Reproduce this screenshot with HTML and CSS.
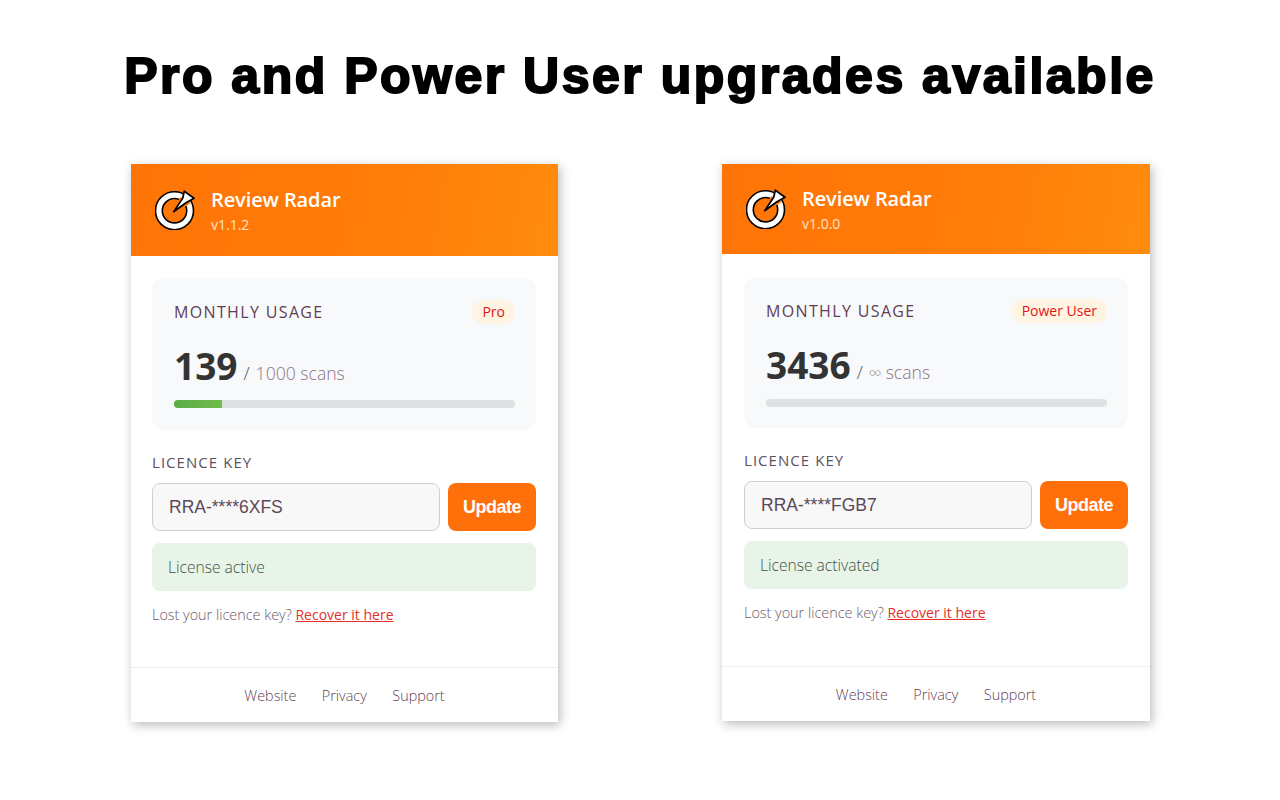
FILE: index.html
```html
<!DOCTYPE html>
<html lang="en">
<head>
<meta charset="utf-8">
<title>Review Radar</title>
<link rel="stylesheet" href="styles.css">
</head>
<body>
<svg class="defs" width="0" height="0" aria-hidden="true">
  <symbol id="radar" viewBox="0 0 40 40">
    <circle cx="19.5" cy="20.7" r="15.6" fill="none" stroke="#000" stroke-width="8.4"/>
    <circle cx="19.5" cy="20.7" r="15.6" fill="none" stroke="#fff" stroke-width="5.2"/>
    <path d="M18.7 21.7 L26 9 L33 13 Z" fill="#ff7a0a" stroke="#ff7a0a" stroke-width="3"/>
    <path d="M18.7 21.7 L27.7 8.3 L29.3 1.2 L39 8.3 L31 12.7 Z" fill="#fff" stroke="#000" stroke-width="1.7" stroke-linejoin="round"/>
  </symbol>
</svg>
<h1 class="title">Pro and Power User upgrades available</h1>
<main class="cards">
  <section class="card card-a">
    <header class="head head-tall">
      <svg class="logo"><use href="#radar"/></svg>
      <div class="brand"><div class="name">Review Radar</div><div class="ver">v1.1.2</div></div>
    </header>
    <div class="body">
      <div class="usage">
        <div class="usage-top"><span class="usage-label">MONTHLY USAGE</span><span class="badge">Pro</span></div>
        <div class="count"><b>139</b><span class="slash">/</span><span class="of">1000 scans</span></div>
        <div class="track"><div class="fill" style="width:14%"></div></div>
      </div>
      <div class="key-label">LICENCE KEY</div>
      <div class="key-row"><div class="input">RRA-****6XFS</div><div class="btn">Update</div></div>
      <div class="status">License active</div>
      <p class="lost">Lost your licence key? <a href="#">Recover it here</a></p>
    </div>
    <footer class="foot"><a href="#">Website</a><a href="#">Privacy</a><a href="#">Support</a></footer>
  </section>
  <section class="card card-b">
    <header class="head">
      <svg class="logo"><use href="#radar"/></svg>
      <div class="brand"><div class="name">Review Radar</div><div class="ver">v1.0.0</div></div>
    </header>
    <div class="body">
      <div class="usage">
        <div class="usage-top"><span class="usage-label">MONTHLY USAGE</span><span class="badge">Power User</span></div>
        <div class="count"><b>3436</b><span class="slash">/</span><span class="of"><i class="inf">∞</i> scans</span></div>
        <div class="track"></div>
      </div>
      <div class="key-label">LICENCE KEY</div>
      <div class="key-row"><div class="input">RRA-****FGB7</div><div class="btn">Update</div></div>
      <div class="status">License activated</div>
      <p class="lost">Lost your licence key? <a href="#">Recover it here</a></p>
    </div>
    <footer class="foot"><a href="#">Website</a><a href="#">Privacy</a><a href="#">Support</a></footer>
  </section>
</main>
</body>
</html>
```
FILE: styles.css
```css
* { box-sizing: border-box; }
html, body { margin: 0; padding: 0; }
body { width: 1280px; height: 800px; background: #fff; overflow: hidden; font-family: "Open Sans", "Noto Sans", sans-serif; color: #333; }
.defs { position: absolute; }
.title { margin: 0; padding-top: 46px; height: 164px; text-align: center; font-family: "Liberation Sans", Arial, sans-serif; font-weight: 700; font-size: 50px; line-height: 61px; letter-spacing: 2.5px; color: #000; -webkit-text-stroke: 2px #000; white-space: nowrap; }
.cards { display: flex; gap: 164px; padding-left: 131px; align-items: flex-start; }
.card { background: #fff; box-shadow: 2px 3px 10px rgba(0,0,0,.28); display: flex; flex-direction: column; }
.card-a { width: 427px; }
.card-b { width: 428px; }
.head { height: 90px; display: flex; align-items: center; gap: 16px; padding: 0 24px; background: linear-gradient(100deg, #ff7406 0%, #ff7d0a 60%, #ff8c0c 100%); }
.head-tall { height: 92px; }
.logo { width: 40px; height: 40px; flex: none; }
.brand { color: #fff; padding-top: 2px; }
.name { font-size: 20px; line-height: 26px; font-weight: 600; letter-spacing: -.1px; }
.ver { font-size: 14px; line-height: 20px; margin-top: 2px; color: #ffe3c8; }
.body { height: 411px; }
.card-a .body { padding: 22px 22px 0 21px; }
.card-b .body { padding: 23px 22px 0; height: 412px; }
.usage { height: 152px; background: #f8f9fb; border-radius: 12px; padding: 22px 21px 0 22px; }
.card-b .usage { height: 151px; }
.usage-top { display: flex; justify-content: space-between; align-items: center; height: 24px; }
.usage-label { font-size: 16px; letter-spacing: 1.35px; color: #5f3f55; }
.badge { background: #fff3e2; color: #e01515; font-size: 14px; line-height: 24px; padding: 0 10px; border-radius: 12px; }
.count { margin-top: 19px; height: 46px; line-height: 46px; white-space: nowrap; }
.count b { font-size: 37px; font-weight: 700; color: #333; }
.slash { font-size: 18px; font-weight: 300; color: #555; margin: 0 6px; }
.of { font-size: 17.6px; font-weight: 300; color: #8f7088; }
.inf { font-style: normal; color: #999; }
.track { margin-top: 11px; height: 8px; border-radius: 4px; background: #dfe0e1; overflow: hidden; }
.fill { height: 100%; background: linear-gradient(90deg, #59ad45, #72bb4c); }
.key-label { margin-top: 22px; font-size: 15px; line-height: 20px; letter-spacing: 1.05px; color: #5c5060; }
.key-row { display: flex; gap: 8px; margin-top: 11px; height: 48px; }
.input { flex: 1; border: 1px solid #d0d0d0; border-radius: 8px; background: #f8f8f8; padding-left: 16px; font-family: "Liberation Sans", Arial, sans-serif; font-size: 17.5px; line-height: 46px; color: #5a4a58; }
.btn { width: 88px; background: #ff6f0a; border-radius: 8px; color: #fff; font-family: "Liberation Sans", Arial, sans-serif; font-weight: 700; font-size: 18px; letter-spacing: -.5px; line-height: 48px; text-align: center; }
.status { margin-top: 12px; height: 48px; border-radius: 8px; background: #e8f4e8; padding-left: 16px; font-size: 15.6px; font-weight: 300; line-height: 49px; color: #3f5243; }
.lost { margin: 14px 0 0; font-size: 14.4px; line-height: 20px; font-weight: 300; color: #6b5a68; }
.lost a { color: #e5302a; text-decoration: underline; font-weight: 400; font-size: 14px; }
.foot { height: 55px; border-top: 1px solid #eee; display: flex; justify-content: center; align-items: center; gap: 25.5px; }
.foot a { font-size: 14.4px; font-weight: 300; color: #5f3f55; text-decoration: none; }
```
